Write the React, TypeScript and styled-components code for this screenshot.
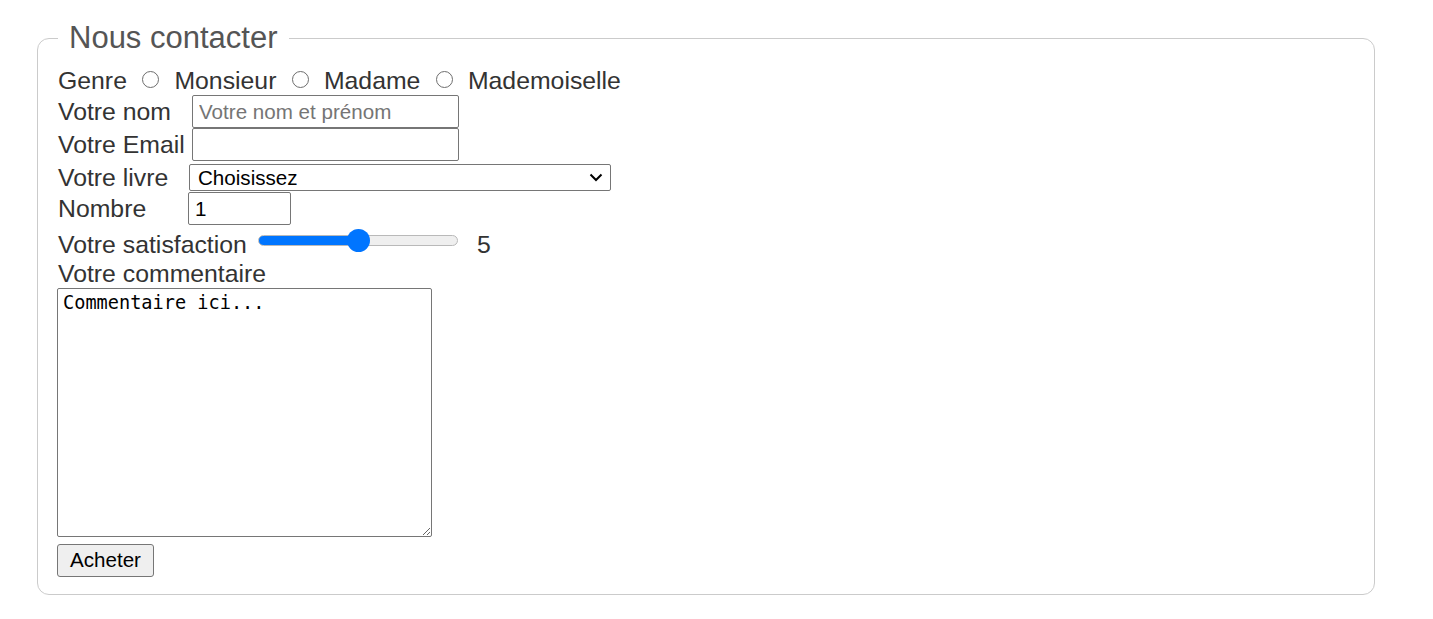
import React, { useState } from 'react';
import styled, { createGlobalStyle } from 'styled-components';

const GlobalStyle = createGlobalStyle`
    html, body {
        margin: 0;
        padding: 0;
        background: #fff;
    }
    body {
        font-family: "Liberation Sans", Arial, sans-serif;
    }
`;

const Page = styled.div`
    padding: 20px 0 0 37px;
`;

const Fieldset = styled.fieldset`
    box-sizing: border-box;
    width: 1338px;
    margin: 0;
    padding: 10px 20px 17px 19px;
    border: 1px solid #cbcbcb;
    border-radius: 12px;
`;

const Legend = styled.legend`
    margin-left: 1px;
    padding: 0 11px;
    font-size: 31px;
    line-height: 36px;
    color: #555;
`;

const Row = styled.div<{ $top?: number; $align?: string }>`
    display: flex;
    align-items: ${p => p.$align ?? 'center'};
    margin-top: ${p => p.$top ?? 0}px;
`;

const Label = styled.span<{ $width?: number; $top?: number }>`
    display: inline-block;
    box-sizing: border-box;
    padding-left: 1px;
    margin-top: ${p => p.$top ?? 0}px;
    ${p => (p.$width ? `width: ${p.$width}px;` : '')}
    font-size: 24.8px;
    line-height: 29px;
    color: #333;
    white-space: nowrap;
`;

const Radio = styled.input.attrs({ type: 'radio' })`
    appearance: none;
    -webkit-appearance: none;
    box-sizing: border-box;
    width: 17px;
    height: 17px;
    margin: 0 14px 2px 15.5px;
    border: 1.5px solid #6e6e6e;
    border-radius: 50%;
    background: #fff;
`;

const TextInput = styled.input<{ $width: number }>`
    box-sizing: border-box;
    width: ${p => p.$width}px;
    height: 33px;
    margin: 0;
    padding: 0 6px;
    border: 1px solid #767676;
    border-radius: 2px;
    font-family: "Liberation Sans", Arial, sans-serif;
    font-size: 20.6px;
    color: #000;
    outline: none;

    &::placeholder {
        color: #757575;
    }
    &::-webkit-inner-spin-button,
    &::-webkit-outer-spin-button {
        -webkit-appearance: none;
        margin: 0;
    }
`;

const SelectWrap = styled.div`
    position: relative;
    display: inline-block;
    height: 27px;
`;

const Select = styled.select`
    appearance: none;
    -webkit-appearance: none;
    box-sizing: border-box;
    display: block;
    width: 422px;
    height: 27px;
    margin: 0;
    padding: 0 30px 0 8px;
    border: 1px solid #767676;
    border-radius: 2px;
    background: #fff;
    font-family: "Liberation Sans", Arial, sans-serif;
    font-size: 20.6px;
    color: #000;
    outline: none;
`;

const Chevron = styled.svg`
    position: absolute;
    right: 8px;
    top: 9px;
    pointer-events: none;
`;

const Range = styled.input.attrs({ type: 'range' })<{ $pct: number }>`
    -webkit-appearance: none;
    appearance: none;
    width: 200px;
    height: 24px;
    margin: 3px 0 0 0;
    background: transparent;

    &::-webkit-slider-runnable-track {
        box-sizing: border-box;
        height: 11px;
        border-radius: 6px;
        border: 1px solid #b9b9b9;
        background: linear-gradient(
            to right,
            #0075ff 0,
            #0075ff ${p => p.$pct}%,
            #efefef ${p => p.$pct}%,
            #efefef 100%
        );
    }
    &::-webkit-slider-thumb {
        -webkit-appearance: none;
        width: 23px;
        height: 23px;
        margin-top: -7px;
        border: none;
        border-radius: 50%;
        background: #0075ff;
    }
`;

const RangeValue = styled.span`
    margin: 4.5px 0 0 19px;
    font-size: 24.8px;
    line-height: 29px;
    color: #333;
`;

const Comment = styled.textarea`
    display: block;
    box-sizing: border-box;
    width: 375px;
    height: 249px;
    margin: 0;
    padding: 3px 5px;
    border: 1px solid #767676;
    border-radius: 2px;
    font-family: "DejaVu Sans Mono", "Liberation Mono", monospace;
    font-size: 18.6px;
    line-height: 22px;
    color: #000;
    outline: none;
`;

const SubmitButton = styled.button`
    box-sizing: border-box;
    width: 97px;
    height: 33px;
    margin-top: 7px;
    padding: 0;
    border: 1px solid #767676;
    border-radius: 3px;
    background: #efefef;
    font-family: "Liberation Sans", Arial, sans-serif;
    font-size: 20.6px;
    color: #000;
`;

const genres = ['Monsieur', 'Madame', 'Mademoiselle'];

const App: React.FC = () => {
    const [satisfaction, setSatisfaction] = useState(5);

    return (
        <Page>
            <GlobalStyle />
            <form onSubmit={e => e.preventDefault()}>
                <Fieldset>
                    <Legend>Nous contacter</Legend>

                    <Row>
                        <Label>Genre</Label>
                        {genres.map(g => (
                            <React.Fragment key={g}>
                                <Radio name="genre" value={g} />
                                <Label>{g}</Label>
                            </React.Fragment>
                        ))}
                    </Row>

                    <Row>
                        <Label $width={135}>Votre nom</Label>
                        <TextInput $width={267} type="text" placeholder="Votre nom et prénom" />
                    </Row>

                    <Row>
                        <Label $width={135}>Votre Email</Label>
                        <TextInput $width={267} type="email" />
                    </Row>

                    <Row $top={2}>
                        <Label $width={132}>Votre livre</Label>
                        <SelectWrap>
                            <Select defaultValue="">
                                <option value="">Choisissez</option>
                            </Select>
                            <Chevron width="14" height="9" viewBox="0 0 14 9">
                                <path d="M1.5 1.5 L7 7 L12.5 1.5" fill="none" stroke="#000" strokeWidth="2" />
                            </Chevron>
                        </SelectWrap>
                    </Row>

                    <Row>
                        <Label $width={131}>Nombre</Label>
                        <TextInput $width={103} type="number" defaultValue={1} />
                    </Row>

                    <Row $align="flex-start">
                        <Label $width={201} $top={4.5}>Votre satisfaction</Label>
                        <Range
                            min={0}
                            max={10}
                            value={satisfaction}
                            $pct={satisfaction * 10}
                            onChange={e => setSatisfaction(Number(e.target.value))}
                        />
                        <RangeValue>{satisfaction}</RangeValue>
                    </Row>

                    <Row>
                        <Label>Votre commentaire</Label>
                    </Row>
                    <Comment defaultValue="Commentaire ici..." />

                    <SubmitButton type="submit">Acheter</SubmitButton>
                </Fieldset>
            </form>
        </Page>
    );
};

export default App;
